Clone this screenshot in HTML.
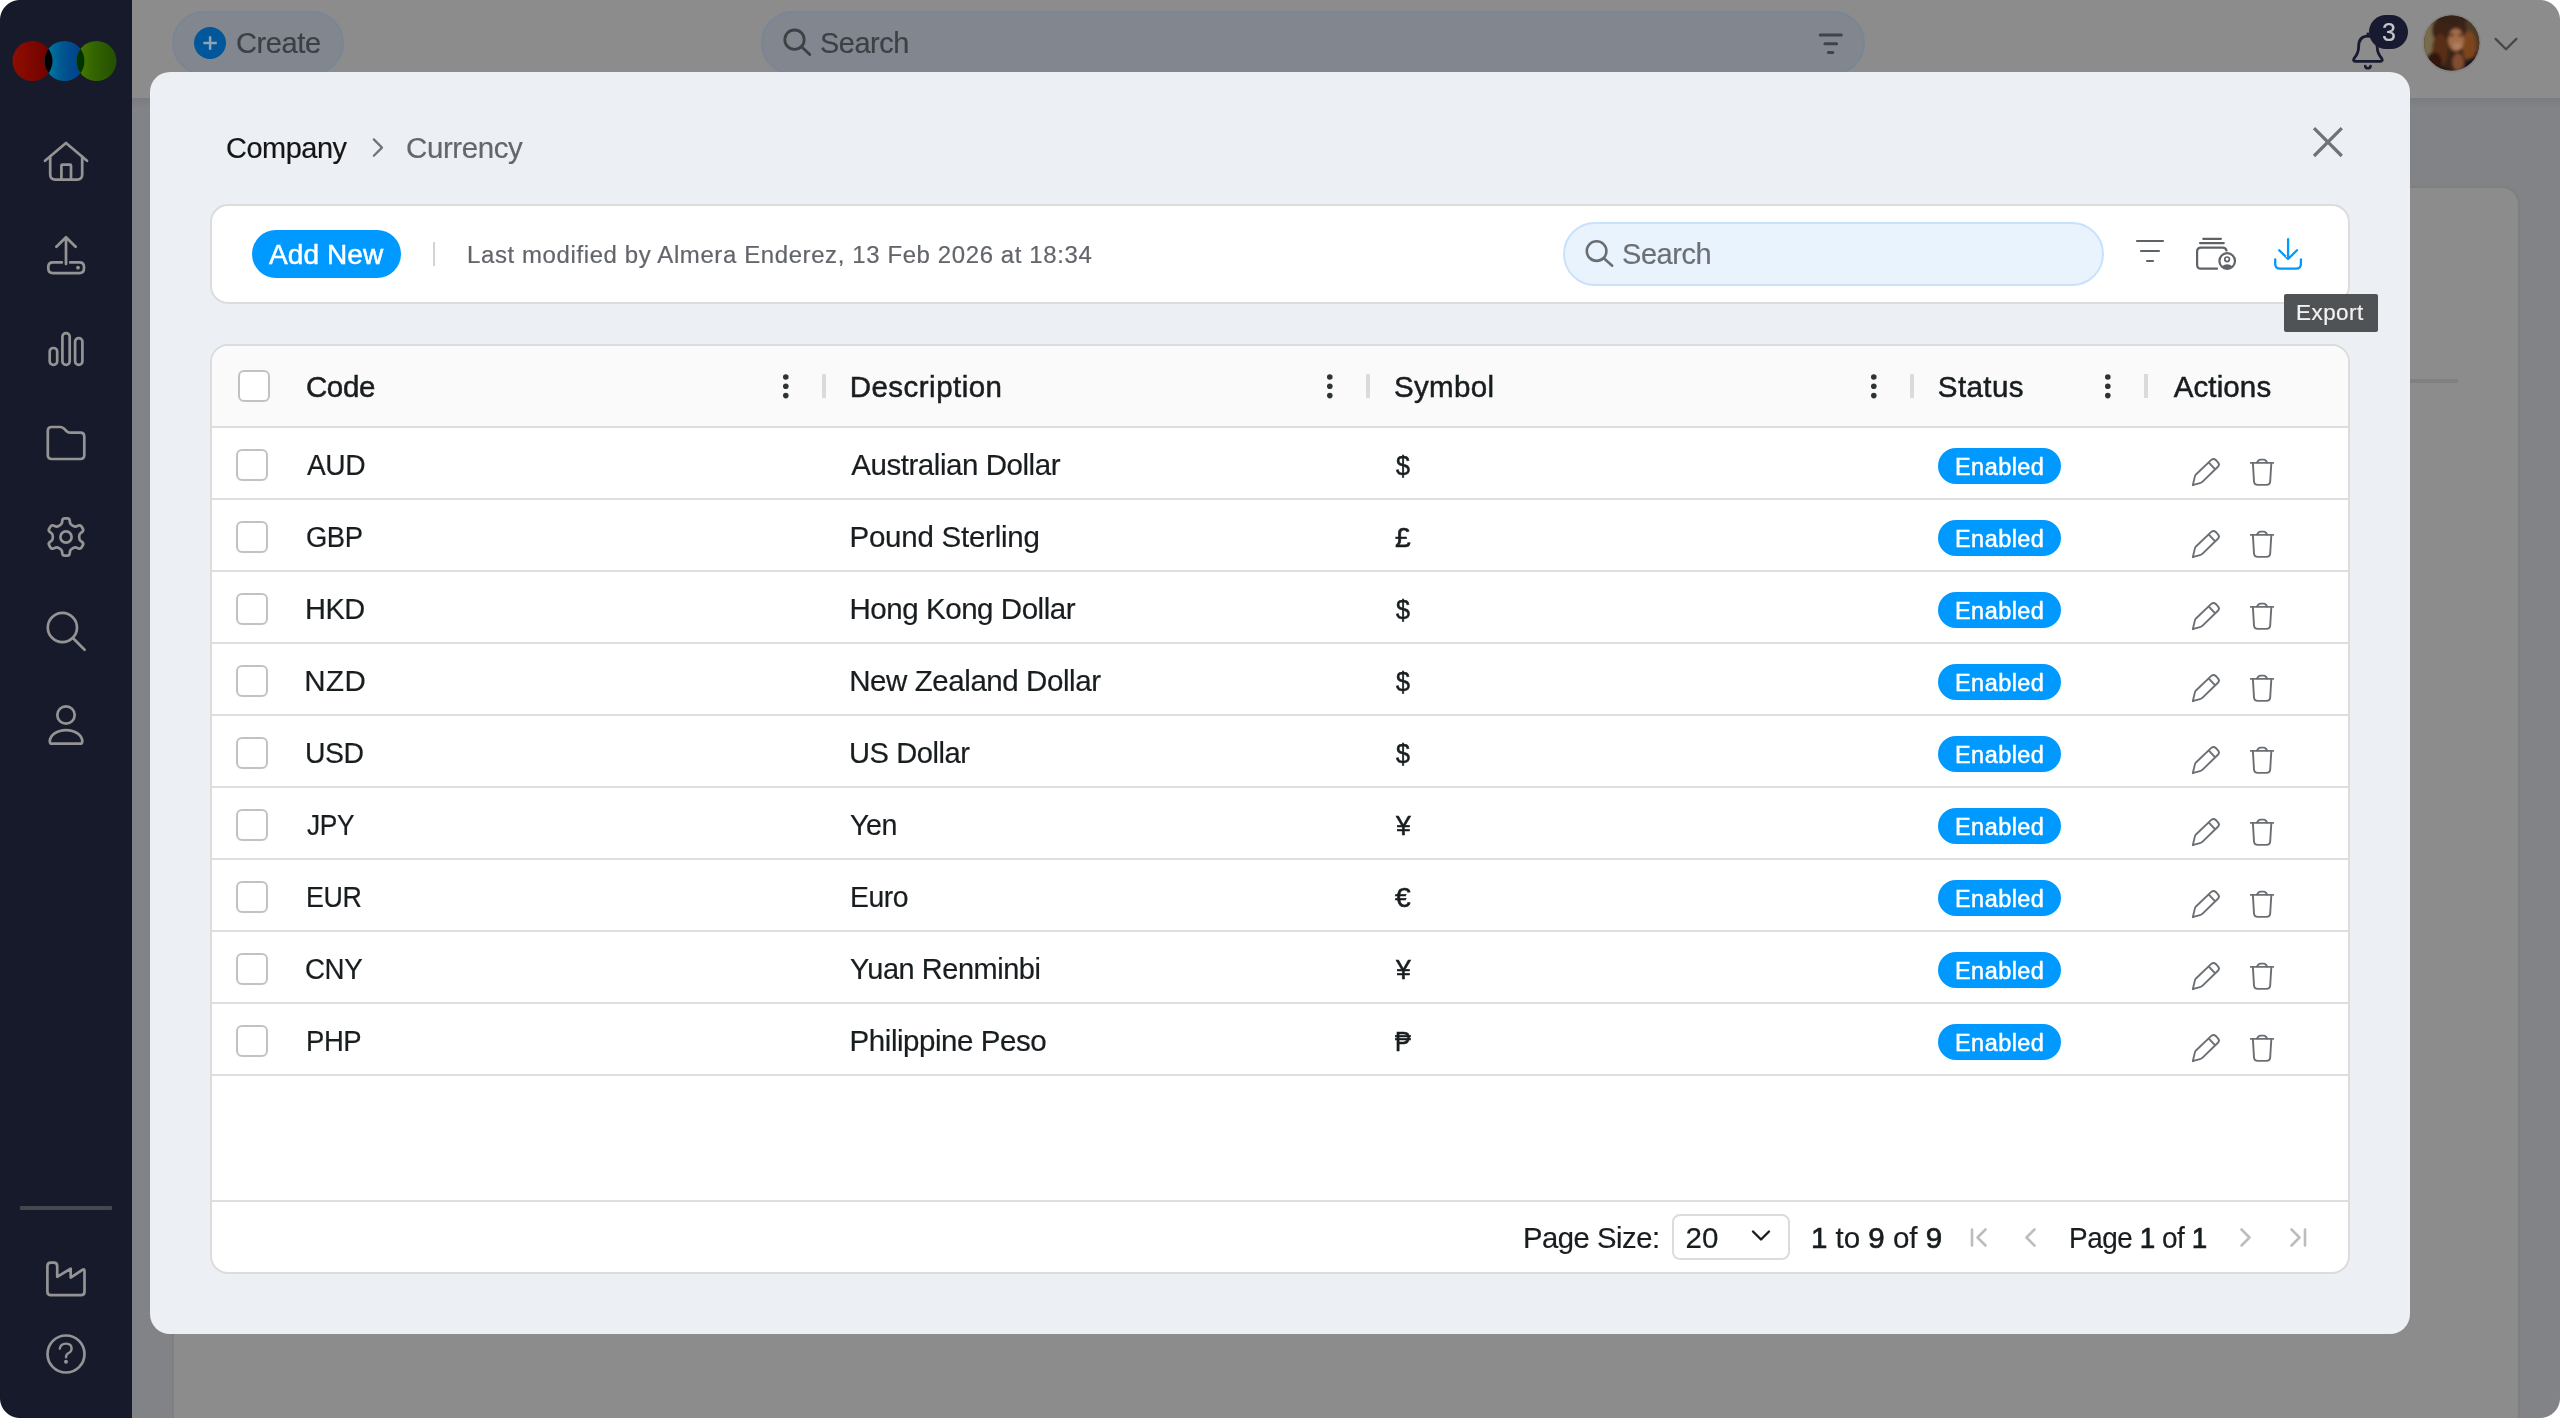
<!DOCTYPE html>
<html lang="en">
<head>
<meta charset="utf-8">
<title>Currency</title>
<style>
*{box-sizing:border-box;margin:0;padding:0}
html,body{width:2560px;height:1418px;overflow:hidden;background:#fff}
body{font-family:"Liberation Sans","DejaVu Sans",sans-serif;position:relative}
#app{position:absolute;left:0;top:0;width:2560px;height:1418px;overflow:hidden;background:#828386}
.abs{position:absolute}
#txt{position:absolute;left:0;top:0;width:2560px;height:1418px;will-change:transform}
.t{position:absolute;line-height:1;white-space:nowrap;display:block;transform-origin:0 0}
.b{-webkit-text-stroke:0.7px #181d1f}
svg{position:absolute;overflow:visible}
/* background app (dimmed by overlay) */
#topbar{position:absolute;left:132px;top:0;width:2428px;height:98px;background:#8c8c8c}
#topshadow{position:absolute;left:132px;top:98px;width:2428px;height:10px;background:linear-gradient(#7b7c7f,#828386)}
#bgcard{position:absolute;left:172px;top:186px;width:2348px;height:1300px;background:#8c8c8c;border:2px solid #7f7f80;border-radius:18px}
#bgline{position:absolute;left:2400px;top:379px;width:58px;height:4px;background:#808081}
#sidebar{position:absolute;left:0;top:0;width:132px;height:1418px;background:#171a2b}
#sideline{position:absolute;left:20px;top:1206px;width:92px;height:4px;background:#46474d;border-radius:1px}
.pill0{position:absolute;top:11px;height:64px;border-radius:32px;background:#82878f;border:2px solid #7a8694}
/* window corners */
.corner{position:absolute;width:20px;height:20px}
/* modal */
#modal{position:absolute;left:150px;top:72px;width:2260px;height:1262px;background:#eceff4;border-radius:20px}
.panel{position:absolute;left:210px;width:2140px;background:#fff;border:2px solid #dcdcdc;border-radius:18px;overflow:hidden}
#addnew{position:absolute;left:252px;top:230px;width:149px;height:48px;border-radius:24px;background:#0099ff}
#vdiv{position:absolute;left:433px;top:242px;width:2px;height:24px;background:#d3d3d3}
#search1{position:absolute;left:1563px;top:222px;width:541px;height:64px;border-radius:32px;background:#e8f3fe;border:2px solid #c8e2fc}
#tooltip{position:absolute;left:2284px;top:294px;width:94px;height:38px;background:#505356;border-radius:2px}
#ghead{position:absolute;left:212px;top:346px;width:2136px;height:80px;background:#fafafa;border-radius:16px 16px 0 0}
.hl{position:absolute;left:212px;width:2136px;height:2px;background:#dcdfe0}
.cb{position:absolute;width:32px;height:32px;border:2px solid #c2c2c2;border-radius:6px;background:#fff}
.rs{position:absolute;top:374px;width:4px;height:24px;background:#dadada}
.en{position:absolute;left:1938px;width:123px;height:36px;border-radius:18px;background:#0099ff}
#psel{position:absolute;left:1672px;top:1214px;width:118px;height:46px;border:2px solid #dcdcdc;border-radius:8px;background:#fff}
</style>
</head>
<body>
<div id="app">
  <!-- dimmed application behind the dialog -->
  <div id="topbar"></div>
  <div id="topshadow"></div>
  <div id="bgcard"></div>
  <div id="bgline"></div>
  <div id="sidebar"></div>
  <div id="sideline"></div>
  <svg id="sideicons" width="132" height="1418" viewBox="0 0 132 1418" style="left:0;top:0">
<defs>
<linearGradient id="lgR" x1="0" x2="1" y1="0" y2="0"><stop offset="0" stop-color="#8f0e00"/><stop offset="1" stop-color="#6d0000"/></linearGradient>
<linearGradient id="lgB" x1="0" x2="1" y1="0" y2="0"><stop offset="0" stop-color="#007fa6"/><stop offset="0.45" stop-color="#00568f"/><stop offset="1" stop-color="#003b8e"/></linearGradient>
<linearGradient id="lgG" x1="0" x2="1" y1="0" y2="0"><stop offset="0" stop-color="#4b7d00"/><stop offset="0.4" stop-color="#356600"/><stop offset="1" stop-color="#234f00"/></linearGradient>
<clipPath id="cpR"><circle cx="32.5" cy="61" r="20"/></clipPath>
<clipPath id="cpB"><circle cx="64.5" cy="61" r="20"/></clipPath>
</defs>
<circle cx="32.5" cy="61" r="20" fill="url(#lgR)"/>
<circle cx="64.5" cy="61" r="20" fill="url(#lgB)"/>
<circle cx="96.5" cy="61" r="20" fill="url(#lgG)"/>
<circle cx="64.5" cy="61" r="20" fill="#000" clip-path="url(#cpR)"/>
<circle cx="96.5" cy="61" r="20" fill="#003300" clip-path="url(#cpB)"/>
<g fill="none" stroke="#949494" stroke-width="2.7" stroke-linecap="round" stroke-linejoin="round">
<path d="M45 160.8 L66 143 L87 160.8"/>
<path d="M50.2 156.5 L50.2 174.5 Q50.2 179.6 55.3 179.6 L77.1 179.6 Q82.2 179.6 82.2 174.5 L82.2 156.5"/>
<path d="M61.4 179.6 L61.4 165.6 Q61.4 164.6 62.4 164.6 L70 164.6 Q71 164.6 71 165.6 L71 179.6" stroke-linejoin="miter" stroke-linecap="butt"/>
<path d="M66 264 L66 237.5 M56.4 246.8 L66 237.2 L75.6 246.8"/>
<path d="M61.8 262.4 L53 262.4 Q48.3 262.4 48.3 267 L48.3 268.5 Q48.3 273.1 53 273.1 L79.3 273.1 Q84 273.1 84 268.5 L84 267 Q84 262.4 79.3 262.4 L70.2 262.4"/>
<rect x="49.7" y="348" width="7.5" height="16.8" rx="3.6"/>
<rect x="62.4" y="333.1" width="7.3" height="31.7" rx="3.6"/>
<rect x="75.1" y="338.1" width="7.3" height="26.7" rx="3.6"/>
<path d="M47.8 431 Q47.8 427 51.8 427 L60.3 427 Q62.3 427 63.8 428.4 L66.4 431 Q68 432.6 70 432.6 L80.3 432.6 Q84.3 432.6 84.3 436.6 L84.3 455 Q84.3 459 80.3 459 L51.8 459 Q47.8 459 47.8 455 Z"/>
<path d="M61.93 522.98 L62.32 520.38 Q62.64 518.30 64.74 518.30 L67.26 518.30 Q69.36 518.30 69.68 520.38 L70.07 522.98 C70.33 524.66 74.52 527.08 76.11 526.46 L78.56 525.50 Q80.51 524.74 81.56 526.55 L82.83 528.75 Q83.88 530.56 82.24 531.87 L80.18 533.52 C78.85 534.58 78.85 539.42 80.18 540.48 L82.24 542.13 Q83.88 543.44 82.83 545.25 L81.56 547.45 Q80.51 549.26 78.56 548.50 L76.11 547.54 C74.52 546.92 70.33 549.34 70.07 551.02 L69.68 553.62 Q69.36 555.70 67.26 555.70 L64.74 555.70 Q62.64 555.70 62.32 553.62 L61.93 551.02 C61.67 549.34 57.48 546.92 55.89 547.54 L53.44 548.50 Q51.49 549.26 50.44 547.45 L49.17 545.25 Q48.12 543.44 49.76 542.13 L51.82 540.48 C53.15 539.42 53.15 534.58 51.82 533.52 L49.76 531.87 Q48.12 530.56 49.17 528.75 L50.44 526.55 Q51.49 524.74 53.44 525.50 L55.89 526.46 C57.48 527.08 61.67 524.66 61.93 522.98 Z"/>
<circle cx="66" cy="537" r="5.6"/>
<circle cx="62.4" cy="627.5" r="14.6"/>
<path d="M72.9 638 L84.6 649.7"/>
<circle cx="66" cy="715" r="8.7"/>
<path d="M49.8 741.4 A16.25 11.3 0 0 1 82.3 741.4 Q82.3 743.7 80 743.7 L52.1 743.7 Q49.8 743.7 49.8 741.4 Z"/>
<path d="M47.4 1266 Q47.4 1262.6 50.8 1262.6 L53.8 1262.6 Q57.2 1262.6 57.2 1266 L57.2 1276.8 L70.7 1268.6 L70.7 1277.6 L82.4 1269.8 Q84.5 1268.6 84.5 1271 L84.5 1291.8 Q84.5 1295.2 81.1 1295.2 L50.8 1295.2 Q47.4 1295.2 47.4 1291.8 Z"/>
<circle cx="66" cy="1354" r="18.5"/>
<path d="M59.8 1348.6 Q60.6 1343.6 66 1343.6 Q71.6 1343.6 71.6 1348.4 Q71.6 1351.4 68.6 1353 Q66 1354.4 66 1357.2" stroke-width="2.4"/>
</g>
<circle cx="78" cy="267.7" r="1.9" fill="#949494"/>
<circle cx="66" cy="1361.8" r="2" fill="#949494"/>
</svg>
  <div class="pill0" style="left:172px;width:172px"></div>
  <div class="pill0" style="left:761px;width:1104px"></div>
  <svg id="topicons" width="2560" height="100" viewBox="0 0 2560 100" style="left:0;top:0">
<defs>
<clipPath id="cpAv"><circle cx="2451.7" cy="43.1" r="27.6"/></clipPath>
<filter id="blAv" x="-20%" y="-20%" width="140%" height="140%"><feGaussianBlur stdDeviation="1.8"/></filter>
</defs>
<circle cx="210" cy="43" r="16" fill="#02579a"/>
<path d="M203.4 43 L216.8 43 M210.1 36.3 L210.1 49.7" stroke="#8ea3b8" stroke-width="2.5" fill="none"/>
<g fill="none" stroke="#3d4044" stroke-width="2.8" stroke-linecap="round">
<circle cx="794.5" cy="39.7" r="9.7"/>
<path d="M801.6 46.8 L809.8 54.6"/>
</g>
<g fill="none" stroke="#3f434a" stroke-width="3" stroke-linecap="round">
<path d="M1820.2 35 L1841.3 35 M1824.9 43.8 L1836.6 43.8 M1828.4 52.5 L1832.8 52.5"/>
</g>
<g fill="none" stroke="#171a30" stroke-width="2.8" stroke-linecap="round" stroke-linejoin="round">
<path d="M2367.9 36.1 C2360.8 36.1 2358.6 41.5 2358.6 47 C2358.6 53 2356.6 55.5 2354.2 58.2 Q2352.4 61.4 2356 61.4 L2379.8 61.4 Q2383.4 61.4 2381.6 58.2 C2379.2 55.5 2377.2 53 2377.2 47 C2377.2 41.5 2375 36.1 2367.9 36.1 Z"/>
<path d="M2367.9 35.6 L2367.9 33.9"/>
<path d="M2365.2 66 Q2365.5 68.3 2367.9 68.3 Q2370.3 68.3 2370.6 66" stroke-width="2.6"/>
</g>
<rect x="2369" y="15" width="39" height="34" rx="17" fill="#171a30"/>
<circle cx="2451.7" cy="43.1" r="29.4" fill="#838383"/>
<g clip-path="url(#cpAv)">
<rect x="2420" y="12" width="64" height="64" fill="#3a2316"/>
<g filter="url(#blAv)">
<rect x="2420" y="14" width="16" height="44" fill="#786c4c"/>
<rect x="2466" y="12" width="18" height="40" fill="#4d3a28"/>
<ellipse cx="2447" cy="30" rx="15" ry="16" fill="#3e2416"/>
<ellipse cx="2440" cy="50" rx="8" ry="16" fill="#5a2f18"/>
<ellipse cx="2434" cy="62" rx="8" ry="10" fill="#33190d"/>
<ellipse cx="2469" cy="46" rx="7" ry="15" fill="#7d441f"/>
<ellipse cx="2456" cy="40" rx="8" ry="11.5" fill="#a36c49"/>
<ellipse cx="2457.5" cy="46" rx="4.5" ry="3.5" fill="#b07d5e"/>
<ellipse cx="2451" cy="35" rx="3" ry="1.5" fill="#5a3826"/>
<ellipse cx="2461" cy="35" rx="3" ry="1.5" fill="#5a3826"/>
<ellipse cx="2458" cy="62" rx="6" ry="9" fill="#804e30"/>
<ellipse cx="2475" cy="66" rx="11" ry="9" fill="#14181a"/>
<ellipse cx="2440" cy="72" rx="9" ry="5" fill="#15120f"/>
<ellipse cx="2452" cy="19" rx="13" ry="5" fill="#352014"/>
</g>
</g>
<path d="M2495.6 38.9 L2506 49.3 L2516.4 38.9" fill="none" stroke="#43464a" stroke-width="2.2" stroke-linecap="round" stroke-linejoin="round"/>
</svg>

  <!-- dialog -->
  <div id="modal"></div>
  <div class="panel" style="top:204px;height:100px"></div>
  <div id="addnew"></div>
  <div id="vdiv"></div>
  <div id="search1"></div>
  <div class="panel" style="top:344px;height:930px"></div>
  <div id="ghead"></div>
  <div class="hl" style="top:426px"></div>
<div class="hl" style="top:498px"></div>
<div class="hl" style="top:570px"></div>
<div class="hl" style="top:642px"></div>
<div class="hl" style="top:714px"></div>
<div class="hl" style="top:786px"></div>
<div class="hl" style="top:858px"></div>
<div class="hl" style="top:930px"></div>
<div class="hl" style="top:1002px"></div>
<div class="hl" style="top:1074px"></div>
<div class="hl" style="top:1200px"></div>
<div class="cb" style="left:238px;top:370px"></div>
<div class="cb" style="left:236px;top:449px"></div>
<div class="cb" style="left:236px;top:521px"></div>
<div class="cb" style="left:236px;top:593px"></div>
<div class="cb" style="left:236px;top:665px"></div>
<div class="cb" style="left:236px;top:737px"></div>
<div class="cb" style="left:236px;top:809px"></div>
<div class="cb" style="left:236px;top:881px"></div>
<div class="cb" style="left:236px;top:953px"></div>
<div class="cb" style="left:236px;top:1025px"></div>
<div class="rs" style="left:822px"></div>
<div class="rs" style="left:1366px"></div>
<div class="rs" style="left:1910px"></div>
<div class="rs" style="left:2144px"></div>
<div class="en" style="top:448px"></div>
<div class="en" style="top:520px"></div>
<div class="en" style="top:592px"></div>
<div class="en" style="top:664px"></div>
<div class="en" style="top:736px"></div>
<div class="en" style="top:808px"></div>
<div class="en" style="top:880px"></div>
<div class="en" style="top:952px"></div>
<div class="en" style="top:1024px"></div>
  <div id="psel"></div>
  <svg id="modalicons" width="2560" height="1418" viewBox="0 0 2560 1418" style="left:0;top:0">
<path d="M373.8 139.4 L382 147.6 L373.8 155.8" fill="none" stroke="#6f7378" stroke-width="2.2" stroke-linecap="round" stroke-linejoin="round"/>
<path d="M2314 128.2 L2341.8 156 M2341.8 128.2 L2314 156" fill="none" stroke="#6f7378" stroke-width="3.2"/>
<g fill="none" stroke="#6a6e73" stroke-width="2.6" stroke-linecap="round"><circle cx="1596.6" cy="251.1" r="9.8"/><path d="M1603.8 258.3 L1612.2 265.7"/></g>
<path d="M2137 241 L2163 241 M2141 251 L2159 251 M2147 261 L2153 261" fill="none" stroke="#5f6368" stroke-width="2.1" stroke-linecap="round"/>
<g fill="none" stroke="#5f6368" stroke-width="2.2" stroke-linecap="round" stroke-linejoin="round"><path d="M2203.2 238.8 L2220.9 238.8 M2200 243.1 L2223.8 243.1"/><path d="M2217 268.7 L2201.1 268.7 Q2197.1 268.7 2197.1 264.7 L2197.1 251.6 Q2197.1 247.6 2201.1 247.6 L2222.6 247.6 Q2226 247.6 2226.5 250.5"/><circle cx="2227.2" cy="261" r="7.8"/><circle cx="2227.1" cy="259.3" r="2.3" stroke-width="1.7"/></g>
<path d="M2222 266.3 Q2227.2 262.2 2232.4 266.3 Q2227.2 270 2222 266.3 Z" fill="#5f6368"/>
<g fill="none" stroke="#0099ff" stroke-width="2.3" stroke-linecap="round" stroke-linejoin="round"><path d="M2288.1 239.2 L2288.1 258.6 M2279.2 250.2 L2288.1 259 L2297 250.2"/><path d="M2275.2 259.4 L2275.2 263.7 Q2275.2 268.7 2280.2 268.7 L2295.9 268.7 Q2300.9 268.7 2300.9 263.7 L2300.9 259.4"/></g>
<circle cx="785.8" cy="377" r="2.8" fill="#2f3336"/>
<circle cx="785.8" cy="386.3" r="2.8" fill="#2f3336"/>
<circle cx="785.8" cy="395.6" r="2.8" fill="#2f3336"/>
<circle cx="1329.8" cy="377" r="2.8" fill="#2f3336"/>
<circle cx="1329.8" cy="386.3" r="2.8" fill="#2f3336"/>
<circle cx="1329.8" cy="395.6" r="2.8" fill="#2f3336"/>
<circle cx="1873.8" cy="377" r="2.8" fill="#2f3336"/>
<circle cx="1873.8" cy="386.3" r="2.8" fill="#2f3336"/>
<circle cx="1873.8" cy="395.6" r="2.8" fill="#2f3336"/>
<circle cx="2107.8" cy="377" r="2.8" fill="#2f3336"/>
<circle cx="2107.8" cy="386.3" r="2.8" fill="#2f3336"/>
<circle cx="2107.8" cy="395.6" r="2.8" fill="#2f3336"/>
<g transform="translate(0 0)" fill="none" stroke="#6b6f74" stroke-width="1.9" stroke-linecap="round" stroke-linejoin="round"><path d="M2192.8 485.2 L2194.9 476.4 Q2195.2 475.2 2196.2 474.2 L2211.3 459.9 Q2213.6 457.9 2215.8 460 L2218 462.3 Q2220 464.6 2217.9 466.8 L2202.6 481.6 Q2201.8 482.4 2200.6 482.8 Z"/><path d="M2208.9 462.6 L2214.7 468.8"/><path d="M2250.8 462.9 L2273.2 462.9"/><path d="M2256.9 462.6 L2258.4 460.6 Q2259.2 459.6 2260.6 459.6 L2263.6 459.6 Q2265 459.6 2265.8 460.6 L2267.3 462.6"/><path d="M2252.9 463.4 L2254 481.4 Q2254.3 484.9 2257.8 484.9 L2266.4 484.9 Q2269.9 484.9 2270.2 481.4 L2271.3 463.4"/></g>
<g transform="translate(0 72)" fill="none" stroke="#6b6f74" stroke-width="1.9" stroke-linecap="round" stroke-linejoin="round"><path d="M2192.8 485.2 L2194.9 476.4 Q2195.2 475.2 2196.2 474.2 L2211.3 459.9 Q2213.6 457.9 2215.8 460 L2218 462.3 Q2220 464.6 2217.9 466.8 L2202.6 481.6 Q2201.8 482.4 2200.6 482.8 Z"/><path d="M2208.9 462.6 L2214.7 468.8"/><path d="M2250.8 462.9 L2273.2 462.9"/><path d="M2256.9 462.6 L2258.4 460.6 Q2259.2 459.6 2260.6 459.6 L2263.6 459.6 Q2265 459.6 2265.8 460.6 L2267.3 462.6"/><path d="M2252.9 463.4 L2254 481.4 Q2254.3 484.9 2257.8 484.9 L2266.4 484.9 Q2269.9 484.9 2270.2 481.4 L2271.3 463.4"/></g>
<g transform="translate(0 144)" fill="none" stroke="#6b6f74" stroke-width="1.9" stroke-linecap="round" stroke-linejoin="round"><path d="M2192.8 485.2 L2194.9 476.4 Q2195.2 475.2 2196.2 474.2 L2211.3 459.9 Q2213.6 457.9 2215.8 460 L2218 462.3 Q2220 464.6 2217.9 466.8 L2202.6 481.6 Q2201.8 482.4 2200.6 482.8 Z"/><path d="M2208.9 462.6 L2214.7 468.8"/><path d="M2250.8 462.9 L2273.2 462.9"/><path d="M2256.9 462.6 L2258.4 460.6 Q2259.2 459.6 2260.6 459.6 L2263.6 459.6 Q2265 459.6 2265.8 460.6 L2267.3 462.6"/><path d="M2252.9 463.4 L2254 481.4 Q2254.3 484.9 2257.8 484.9 L2266.4 484.9 Q2269.9 484.9 2270.2 481.4 L2271.3 463.4"/></g>
<g transform="translate(0 216)" fill="none" stroke="#6b6f74" stroke-width="1.9" stroke-linecap="round" stroke-linejoin="round"><path d="M2192.8 485.2 L2194.9 476.4 Q2195.2 475.2 2196.2 474.2 L2211.3 459.9 Q2213.6 457.9 2215.8 460 L2218 462.3 Q2220 464.6 2217.9 466.8 L2202.6 481.6 Q2201.8 482.4 2200.6 482.8 Z"/><path d="M2208.9 462.6 L2214.7 468.8"/><path d="M2250.8 462.9 L2273.2 462.9"/><path d="M2256.9 462.6 L2258.4 460.6 Q2259.2 459.6 2260.6 459.6 L2263.6 459.6 Q2265 459.6 2265.8 460.6 L2267.3 462.6"/><path d="M2252.9 463.4 L2254 481.4 Q2254.3 484.9 2257.8 484.9 L2266.4 484.9 Q2269.9 484.9 2270.2 481.4 L2271.3 463.4"/></g>
<g transform="translate(0 288)" fill="none" stroke="#6b6f74" stroke-width="1.9" stroke-linecap="round" stroke-linejoin="round"><path d="M2192.8 485.2 L2194.9 476.4 Q2195.2 475.2 2196.2 474.2 L2211.3 459.9 Q2213.6 457.9 2215.8 460 L2218 462.3 Q2220 464.6 2217.9 466.8 L2202.6 481.6 Q2201.8 482.4 2200.6 482.8 Z"/><path d="M2208.9 462.6 L2214.7 468.8"/><path d="M2250.8 462.9 L2273.2 462.9"/><path d="M2256.9 462.6 L2258.4 460.6 Q2259.2 459.6 2260.6 459.6 L2263.6 459.6 Q2265 459.6 2265.8 460.6 L2267.3 462.6"/><path d="M2252.9 463.4 L2254 481.4 Q2254.3 484.9 2257.8 484.9 L2266.4 484.9 Q2269.9 484.9 2270.2 481.4 L2271.3 463.4"/></g>
<g transform="translate(0 360)" fill="none" stroke="#6b6f74" stroke-width="1.9" stroke-linecap="round" stroke-linejoin="round"><path d="M2192.8 485.2 L2194.9 476.4 Q2195.2 475.2 2196.2 474.2 L2211.3 459.9 Q2213.6 457.9 2215.8 460 L2218 462.3 Q2220 464.6 2217.9 466.8 L2202.6 481.6 Q2201.8 482.4 2200.6 482.8 Z"/><path d="M2208.9 462.6 L2214.7 468.8"/><path d="M2250.8 462.9 L2273.2 462.9"/><path d="M2256.9 462.6 L2258.4 460.6 Q2259.2 459.6 2260.6 459.6 L2263.6 459.6 Q2265 459.6 2265.8 460.6 L2267.3 462.6"/><path d="M2252.9 463.4 L2254 481.4 Q2254.3 484.9 2257.8 484.9 L2266.4 484.9 Q2269.9 484.9 2270.2 481.4 L2271.3 463.4"/></g>
<g transform="translate(0 432)" fill="none" stroke="#6b6f74" stroke-width="1.9" stroke-linecap="round" stroke-linejoin="round"><path d="M2192.8 485.2 L2194.9 476.4 Q2195.2 475.2 2196.2 474.2 L2211.3 459.9 Q2213.6 457.9 2215.8 460 L2218 462.3 Q2220 464.6 2217.9 466.8 L2202.6 481.6 Q2201.8 482.4 2200.6 482.8 Z"/><path d="M2208.9 462.6 L2214.7 468.8"/><path d="M2250.8 462.9 L2273.2 462.9"/><path d="M2256.9 462.6 L2258.4 460.6 Q2259.2 459.6 2260.6 459.6 L2263.6 459.6 Q2265 459.6 2265.8 460.6 L2267.3 462.6"/><path d="M2252.9 463.4 L2254 481.4 Q2254.3 484.9 2257.8 484.9 L2266.4 484.9 Q2269.9 484.9 2270.2 481.4 L2271.3 463.4"/></g>
<g transform="translate(0 504)" fill="none" stroke="#6b6f74" stroke-width="1.9" stroke-linecap="round" stroke-linejoin="round"><path d="M2192.8 485.2 L2194.9 476.4 Q2195.2 475.2 2196.2 474.2 L2211.3 459.9 Q2213.6 457.9 2215.8 460 L2218 462.3 Q2220 464.6 2217.9 466.8 L2202.6 481.6 Q2201.8 482.4 2200.6 482.8 Z"/><path d="M2208.9 462.6 L2214.7 468.8"/><path d="M2250.8 462.9 L2273.2 462.9"/><path d="M2256.9 462.6 L2258.4 460.6 Q2259.2 459.6 2260.6 459.6 L2263.6 459.6 Q2265 459.6 2265.8 460.6 L2267.3 462.6"/><path d="M2252.9 463.4 L2254 481.4 Q2254.3 484.9 2257.8 484.9 L2266.4 484.9 Q2269.9 484.9 2270.2 481.4 L2271.3 463.4"/></g>
<g transform="translate(0 576)" fill="none" stroke="#6b6f74" stroke-width="1.9" stroke-linecap="round" stroke-linejoin="round"><path d="M2192.8 485.2 L2194.9 476.4 Q2195.2 475.2 2196.2 474.2 L2211.3 459.9 Q2213.6 457.9 2215.8 460 L2218 462.3 Q2220 464.6 2217.9 466.8 L2202.6 481.6 Q2201.8 482.4 2200.6 482.8 Z"/><path d="M2208.9 462.6 L2214.7 468.8"/><path d="M2250.8 462.9 L2273.2 462.9"/><path d="M2256.9 462.6 L2258.4 460.6 Q2259.2 459.6 2260.6 459.6 L2263.6 459.6 Q2265 459.6 2265.8 460.6 L2267.3 462.6"/><path d="M2252.9 463.4 L2254 481.4 Q2254.3 484.9 2257.8 484.9 L2266.4 484.9 Q2269.9 484.9 2270.2 481.4 L2271.3 463.4"/></g>
<path d="M1753 1231.5 L1761 1239.5 L1769 1231.5" fill="none" stroke="#181d1f" stroke-width="2.4" stroke-linecap="round" stroke-linejoin="round"/>
<g fill="none" stroke="#bbbdbf" stroke-width="2.6" stroke-linecap="round" stroke-linejoin="round"><path d="M1972 1229.5 L1972 1245.5 M1985.5 1229.5 L1977.5 1237.5 L1985.5 1245.5"/><path d="M2034.5 1229.5 L2026.5 1237.5 L2034.5 1245.5"/><path d="M2241.5 1229.5 L2249.5 1237.5 L2241.5 1245.5"/><path d="M2291.5 1229.5 L2299.5 1237.5 L2291.5 1245.5 M2305 1229.5 L2305 1245.5"/></g>
</svg>
  <div id="tooltip"></div>

  <!-- all text labels (own layer) -->
  <div id="txt">
  <span class="t" id="t-create" style="left:236.31px;top:28px;font-size:29.5px;color:#3c3f43;letter-spacing:-0.450px;transform:scaleX(0.9860);-webkit-text-stroke:0.2px #3c3f43;">Create</span>
  <span class="t" id="t-search0" style="left:819.52px;top:28px;font-size:29.5px;color:#3d4044;letter-spacing:-0.450px;transform:scaleX(0.9796);-webkit-text-stroke:0.2px #3d4044;">Search</span>
  <span class="t" id="t-badge" style="left:2382.00px;top:20px;font-size:25px;color:#c5c6cc;-webkit-text-stroke:0.2px #c5c6cc;">3</span>
  <span class="t" id="t-company" style="left:226.32px;top:133px;font-size:29.5px;color:#151515;letter-spacing:-0.450px;transform:scaleX(0.9796);-webkit-text-stroke:0.2px #151515;">Company</span>
  <span class="t" id="t-currency" style="left:406.00px;top:133px;font-size:29.5px;color:#63676c;letter-spacing:-0.417px;-webkit-text-stroke:0.2px #63676c;">Currency</span>
  <span class="t" id="t-addnew" style="left:269.00px;top:241px;font-size:28px;color:#ffffff;letter-spacing:0.101px;-webkit-text-stroke:0.5px #ffffff;">Add New</span>
  <span class="t" id="t-lastmod" style="left:466.58px;top:244px;font-size:23.5px;color:#62666b;letter-spacing:0.600px;transform:scaleX(1.0200);-webkit-text-stroke:0.2px #62666b;">Last modified by Almera Enderez, 13 Feb 2026 at 18:34</span>
  <span class="t" id="t-search1" style="left:1621.92px;top:239px;font-size:29.5px;color:#6c7075;letter-spacing:-0.450px;transform:scaleX(0.9830);-webkit-text-stroke:0.2px #6c7075;">Search</span>
  <span class="t" id="h-code" style="left:305.90px;top:372px;font-size:29.5px;color:#181d1f;letter-spacing:-0.339px;-webkit-text-stroke:0.5px #181d1f;">Code</span>
<span class="t" id="h-desc" style="left:849.70px;top:372px;font-size:29.5px;color:#181d1f;letter-spacing:0.475px;-webkit-text-stroke:0.5px #181d1f;">Description</span>
<span class="t" id="h-sym" style="left:1394.00px;top:372px;font-size:29.5px;color:#181d1f;letter-spacing:0.337px;-webkit-text-stroke:0.5px #181d1f;">Symbol</span>
<span class="t" id="h-status" style="left:1937.80px;top:372px;font-size:29.5px;color:#181d1f;letter-spacing:0.424px;-webkit-text-stroke:0.5px #181d1f;">Status</span>
<span class="t" id="h-actions" style="left:2173.70px;top:372px;font-size:29.5px;color:#181d1f;letter-spacing:0.118px;-webkit-text-stroke:0.5px #181d1f;">Actions</span>
  <span class="t" id="r0c" style="left:306.60px;top:450px;font-size:29.5px;color:#181d1f;letter-spacing:-0.450px;transform:scaleX(0.9554);-webkit-text-stroke:0.2px #181d1f;">AUD</span>
<span class="t" id="r0d" style="left:851.25px;top:450px;font-size:29.5px;color:#181d1f;letter-spacing:-0.450px;-webkit-text-stroke:0.2px #181d1f;">Australian Dollar</span>
<span class="t" id="r0s" style="left:1395.70px;top:452px;font-size:28px;color:#181d1f;transform:scaleX(0.8937);-webkit-text-stroke:0.55px #181d1f;">$</span>
<span class="t" id="r0e" style="left:1955.00px;top:456px;font-size:23.5px;color:#ffffff;letter-spacing:0.450px;-webkit-text-stroke:0.5px #ffffff;">Enabled</span>
<span class="t" id="r1c" style="left:305.67px;top:522px;font-size:29.5px;color:#181d1f;letter-spacing:-0.450px;transform:scaleX(0.9276);-webkit-text-stroke:0.2px #181d1f;">GBP</span>
<span class="t" id="r1d" style="left:849.50px;top:522px;font-size:29.5px;color:#181d1f;letter-spacing:-0.240px;-webkit-text-stroke:0.2px #181d1f;">Pound Sterling</span>
<span class="t" id="r1s" style="left:1395.00px;top:523px;font-size:28.5px;color:#181d1f;transform:scaleX(0.9875);-webkit-text-stroke:0.6px #181d1f;">£</span>
<span class="t" id="r1e" style="left:1955.00px;top:528px;font-size:23.5px;color:#ffffff;letter-spacing:0.450px;-webkit-text-stroke:0.5px #ffffff;">Enabled</span>
<span class="t" id="r2c" style="left:305.04px;top:594px;font-size:29.5px;color:#181d1f;letter-spacing:-0.450px;transform:scaleX(0.9814);-webkit-text-stroke:0.2px #181d1f;">HKD</span>
<span class="t" id="r2d" style="left:849.50px;top:594px;font-size:29.5px;color:#181d1f;letter-spacing:-0.450px;-webkit-text-stroke:0.2px #181d1f;">Hong Kong Dollar</span>
<span class="t" id="r2s" style="left:1395.70px;top:596px;font-size:28px;color:#181d1f;transform:scaleX(0.8937);-webkit-text-stroke:0.55px #181d1f;">$</span>
<span class="t" id="r2e" style="left:1955.00px;top:600px;font-size:23.5px;color:#ffffff;letter-spacing:0.450px;-webkit-text-stroke:0.5px #ffffff;">Enabled</span>
<span class="t" id="r3c" style="left:304.25px;top:666px;font-size:29.5px;color:#181d1f;letter-spacing:0.450px;-webkit-text-stroke:0.2px #181d1f;">NZD</span>
<span class="t" id="r3d" style="left:849.20px;top:666px;font-size:29.5px;color:#181d1f;letter-spacing:-0.426px;-webkit-text-stroke:0.2px #181d1f;">New Zealand Dollar</span>
<span class="t" id="r3s" style="left:1395.70px;top:668px;font-size:28px;color:#181d1f;transform:scaleX(0.8937);-webkit-text-stroke:0.55px #181d1f;">$</span>
<span class="t" id="r3e" style="left:1955.00px;top:672px;font-size:23.5px;color:#ffffff;letter-spacing:0.450px;-webkit-text-stroke:0.5px #ffffff;">Enabled</span>
<span class="t" id="r4c" style="left:305.48px;top:738px;font-size:29.5px;color:#181d1f;letter-spacing:-0.450px;transform:scaleX(0.9625);-webkit-text-stroke:0.2px #181d1f;">USD</span>
<span class="t" id="r4d" style="left:849.23px;top:738px;font-size:29.5px;color:#181d1f;letter-spacing:-0.450px;transform:scaleX(0.9859);-webkit-text-stroke:0.2px #181d1f;">US Dollar</span>
<span class="t" id="r4s" style="left:1395.70px;top:740px;font-size:28px;color:#181d1f;transform:scaleX(0.8937);-webkit-text-stroke:0.55px #181d1f;">$</span>
<span class="t" id="r4e" style="left:1955.00px;top:744px;font-size:23.5px;color:#ffffff;letter-spacing:0.450px;-webkit-text-stroke:0.5px #ffffff;">Enabled</span>
<span class="t" id="r5c" style="left:307.40px;top:810px;font-size:29.5px;color:#181d1f;letter-spacing:-0.450px;transform:scaleX(0.8912);-webkit-text-stroke:0.2px #181d1f;">JPY</span>
<span class="t" id="r5d" style="left:850.40px;top:810px;font-size:29.5px;color:#181d1f;letter-spacing:-0.450px;transform:scaleX(0.9710);-webkit-text-stroke:0.2px #181d1f;">Yen</span>
<span class="t" id="r5s" style="left:1395.93px;top:811px;font-size:28.5px;color:#181d1f;transform:scaleX(0.9294);-webkit-text-stroke:0.6px #181d1f;">¥</span>
<span class="t" id="r5e" style="left:1955.00px;top:816px;font-size:23.5px;color:#ffffff;letter-spacing:0.450px;-webkit-text-stroke:0.5px #ffffff;">Enabled</span>
<span class="t" id="r6c" style="left:305.58px;top:882px;font-size:29.5px;color:#181d1f;letter-spacing:-0.450px;transform:scaleX(0.9091);-webkit-text-stroke:0.2px #181d1f;">EUR</span>
<span class="t" id="r6d" style="left:849.68px;top:882px;font-size:29.5px;color:#181d1f;letter-spacing:-0.450px;transform:scaleX(0.9598);-webkit-text-stroke:0.2px #181d1f;">Euro</span>
<span class="t" id="r6s" style="left:1395.00px;top:883px;font-size:28.5px;color:#181d1f;transform:scaleX(0.9875);-webkit-text-stroke:0.6px #181d1f;">€</span>
<span class="t" id="r6e" style="left:1955.00px;top:888px;font-size:23.5px;color:#ffffff;letter-spacing:0.450px;-webkit-text-stroke:0.5px #ffffff;">Enabled</span>
<span class="t" id="r7c" style="left:305.31px;top:954px;font-size:29.5px;color:#181d1f;letter-spacing:-0.450px;transform:scaleX(0.9397);-webkit-text-stroke:0.2px #181d1f;">CNY</span>
<span class="t" id="r7d" style="left:850.40px;top:954px;font-size:29.5px;color:#181d1f;letter-spacing:-0.450px;transform:scaleX(0.9807);-webkit-text-stroke:0.2px #181d1f;">Yuan Renminbi</span>
<span class="t" id="r7s" style="left:1395.93px;top:955px;font-size:28.5px;color:#181d1f;transform:scaleX(0.9294);-webkit-text-stroke:0.6px #181d1f;">¥</span>
<span class="t" id="r7e" style="left:1955.00px;top:960px;font-size:23.5px;color:#ffffff;letter-spacing:0.450px;-webkit-text-stroke:0.5px #ffffff;">Enabled</span>
<span class="t" id="r8c" style="left:305.54px;top:1026px;font-size:29.5px;color:#181d1f;letter-spacing:-0.450px;transform:scaleX(0.9303);-webkit-text-stroke:0.2px #181d1f;">PHP</span>
<span class="t" id="r8d" style="left:849.60px;top:1026px;font-size:29.5px;color:#181d1f;letter-spacing:-0.450px;-webkit-text-stroke:0.2px #181d1f;">Philippine Peso</span>
<span class="t" id="r8s" style="left:1395.00px;top:1027px;font-size:28.5px;color:#181d1f;transform:scaleX(0.8316);-webkit-text-stroke:0.6px #181d1f;">₱</span>
<span class="t" id="r8e" style="left:1955.00px;top:1032px;font-size:23.5px;color:#ffffff;letter-spacing:0.450px;-webkit-text-stroke:0.5px #ffffff;">Enabled</span>
  <span class="t" id="p-size" style="left:1523.02px;top:1223px;font-size:29.5px;color:#181d1f;letter-spacing:-0.450px;transform:scaleX(0.9894);-webkit-text-stroke:0.2px #181d1f;">Page Size:</span>
<span class="t" id="p-20" style="left:1685.40px;top:1223px;font-size:29.5px;color:#181d1f;letter-spacing:0.194px;-webkit-text-stroke:0.2px #181d1f;">20</span>
<span class="t" id="p-range" style="left:1811.00px;top:1223px;font-size:29.5px;color:#181d1f;letter-spacing:-0.020px;-webkit-text-stroke:0.2px #181d1f;"><span class="b">1</span> to <span class="b">9</span> of <span class="b">9</span></span>
<span class="t" id="p-page" style="left:2068.51px;top:1223px;font-size:29.5px;color:#181d1f;letter-spacing:-0.450px;transform:scaleX(0.9441);-webkit-text-stroke:0.2px #181d1f;">Page <span class="b">1</span> of <span class="b">1</span></span>
  <span class="t" id="t-export" style="left:2295.88px;top:302px;font-size:22px;color:#f2f2f2;letter-spacing:0.450px;transform:scaleX(1.0213);-webkit-text-stroke:0.2px #f2f2f2;">Export</span>
  </div>

  <!-- rounded window corners -->
  <div class="corner" style="left:0;top:0;background:radial-gradient(circle at 100% 100%,rgba(255,255,255,0) 19.5px,#fff 20.5px)"></div>
  <div class="corner" style="right:0;top:0;background:radial-gradient(circle at 0 100%,rgba(255,255,255,0) 19.5px,#fff 20.5px)"></div>
  <div class="corner" style="left:0;bottom:0;background:radial-gradient(circle at 100% 0,rgba(255,255,255,0) 19.5px,#fff 20.5px)"></div>
  <div class="corner" style="right:0;bottom:0;background:radial-gradient(circle at 0 0,rgba(255,255,255,0) 19.5px,#fff 20.5px)"></div>
</div>
</body>
</html>
